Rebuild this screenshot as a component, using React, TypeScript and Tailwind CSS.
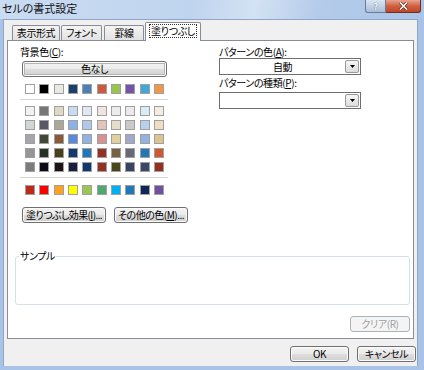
import React from 'react';

const row1 = ['#ffffff', '#000000', '#eceae0', '#17406e', '#4a82b8', '#cc5a3c', '#98c64c', '#7454a6', '#40a8d8', '#f09848'];
const shades = [
  ['#f2f2f2', '#767676', '#e0d8c4', '#c8dcf0', '#dfe8f4', '#f0e4e0', '#ececec', '#ece8ec', '#d8ecf8', '#f4ece4'],
  ['#d2d6d4', '#585866', '#aca898', '#8cb0e8', '#b0c8ec', '#e2c4b8', '#e6dcc8', '#cacaca', '#b8d0f0', '#f2dcc2'],
  ['#a4a6ac', '#404838', '#8a5a38', '#5888e0', '#92b2e0', '#d89090', '#e0d09c', '#a4a8c8', '#92b2e0', '#dcc490'],
  ['#94969a', '#283028', '#484018', '#123a70', '#2078b8', '#943226', '#786044', '#686878', '#2078b8', '#d05830'],
  ['#7c7c7c', '#0c0c14', '#1c1414', '#1c1c3c', '#103870', '#943022', '#484818', '#384464', '#384868', '#943022'],
];
const standard = ['#c02818', '#ff0000', '#ffa020', '#ffff00', '#98c850', '#50a870', '#00b0f0', '#2078b8', '#102858', '#7050a0'];

function Swatch({ c }: { c: string }) {
  return <div className="w-[10px] h-[10px] border border-[#a0a0a0] shrink-0" style={{ background: c }} />;
}

function SwatchRow({ colors }: { colors: string[] }) {
  return (
    <div className="ml-[17px] w-[139px] h-[10px] flex justify-between">
      {colors.map((c, i) => (
        <Swatch key={i} c={c} />
      ))}
    </div>
  );
}

function Btn({ children, className = '' }: { children: React.ReactNode; className?: string }) {
  return (
    <div
      className={`h-[16px] rounded-[3px] border border-[#707070] bg-[linear-gradient(#f3f3f3_0%,#ebebeb_50%,#dedede_50%,#d0d0d0_100%)] shadow-[inset_0_0_0_1px_#fbfbfb] flex items-center justify-center whitespace-nowrap text-[10px] leading-none text-black ${className}`}
    >
      {children}
    </div>
  );
}

function Dropdown({ value }: { value: string }) {
  return (
    <div className="h-[17px] w-[142px] border border-[#6e6e6e] bg-white flex items-center">
      <div className="flex-1 text-center text-[10px] leading-none">{value}</div>
      <div className="w-[14px] h-[13px] mr-[1px] border border-[#9a9a9a] rounded-[2px] bg-[linear-gradient(#f6f6f6,#dcdcdc)] flex items-center justify-center">
        <svg width="5" height="3" viewBox="0 0 5 3">
          <polygon points="0,0 5,0 2.5,3" fill="#000" />
        </svg>
      </div>
    </div>
  );
}

export default function App() {
  return (
    <div className="w-[424px] h-[370px] bg-[#a9c3e8] flex flex-col overflow-hidden font-['Noto_Sans_CJK_JP','Noto_Sans',sans-serif] [font-feature-settings:'palt'] tracking-[-0.4px] text-black">
      {/* title bar */}
      <div className="h-[19px] flex items-start bg-[linear-gradient(100deg,#cadcf2_0%,#bfd4ee_45%,#d3e2f4_60%,#b4cbea_75%,#aac4e8_100%)]">
        <div className="flex-1 pl-[2px] pt-[1px] text-[11px] leading-[14px] tracking-normal text-[#111]">セルの書式設定</div>
        <div className="w-[21px] h-[13px] rounded-bl-[3px] border border-t-0 border-[#6a7c96] bg-[linear-gradient(#dbe5f2,#aabdd8)] flex items-start justify-center pt-[1px]">
          <span className="text-[9px] leading-[11px] font-bold text-white [text-shadow:0_0_1px_#2a3a55]">?</span>
        </div>
        <div className="w-[35px] h-[13px] mr-[3px] rounded-br-[3px] border border-t-0 border-l-0 border-[#6b2f25] bg-[linear-gradient(#e9a492,#d0603f_50%,#c2442a)] flex items-center justify-center">
          <svg width="9" height="8" viewBox="0 0 9 8">
            <path d="M1 0.5 L8 7.5 M8 0.5 L1 7.5" stroke="#4a1a10" strokeWidth="2.6" />
            <path d="M1 0.5 L8 7.5 M8 0.5 L1 7.5" stroke="#fff" strokeWidth="1.6" />
          </svg>
        </div>
      </div>

      {/* middle */}
      <div className="h-[347px] flex">
        <div className="w-[3px]" />
        <div className="w-[415px] border border-b-0 border-[#8ea6c8] bg-[#f0f0f0] flex flex-col">
          {/* tabs */}
          <div className="h-[20px] pt-[2px] pl-[8px] flex items-end text-[10px] leading-none">
            <div className="w-[48px] h-[15px] border border-b-0 border-[#898c95] rounded-t-[2px] bg-[linear-gradient(#f4f4f4,#e2e2e2)] flex items-center justify-center">
              表示形式
            </div>
            <div className="ml-[1px] w-[41px] h-[15px] border border-b-0 border-[#898c95] rounded-t-[2px] bg-[linear-gradient(#f4f4f4,#e2e2e2)] flex items-center justify-center">
              フォント
            </div>
            <div className="ml-[2px] w-[40px] h-[15px] border border-b-0 border-[#898c95] rounded-t-[2px] bg-[linear-gradient(#f4f4f4,#e2e2e2)] flex items-center justify-center">
              罫線
            </div>
            <div className="ml-[1px] w-[56px] h-[19px] -mb-px relative z-10 border border-b-0 border-[#898c95] rounded-t-[2px] bg-white flex items-start justify-center pt-[2px]">
              <span className="outline outline-1 outline-dotted outline-[#333] px-[1px] h-[12px] flex items-center">塗りつぶし</span>
            </div>
          </div>

          {/* panel */}
          <div className="mx-[3px] h-[299px] border border-[#898c95] bg-white flex flex-col text-[10px] leading-none">
            <div className="flex">
              {/* left column */}
              <div className="w-[211px] flex flex-col">
                <div className="mt-[4px] ml-[12px] h-[13px] flex items-center">
                  背景色(<u>C</u>):
                </div>
                <Btn className="mt-[3px] ml-[14px] w-[145px] border-[#5f5f5f] shadow-[inset_0_0_0_1px_#fdfdfd,inset_0_0_0_2px_#b4b4b4]">
                  色なし
                </Btn>
                <div className="mt-[7px]">
                  <SwatchRow colors={row1} />
                </div>
                <div className="mt-[5px] ml-[12px] w-[148px] h-px bg-[#d6d6d6]" />
                <div className="mt-[6px] flex flex-col gap-[4px]">
                  {shades.map((r, i) => (
                    <SwatchRow key={i} colors={r} />
                  ))}
                </div>
                <div className="mt-[5px] ml-[12px] w-[148px] h-px bg-[#d6d6d6]" />
                <div className="mt-[7px]">
                  <SwatchRow colors={standard} />
                </div>
                <div className="mt-[12px] ml-[14px] flex gap-[8px]">
                  <Btn className="w-[84px] tracking-[-0.6px]">
                    塗りつぶし効果(<u>I</u>)...
                  </Btn>
                  <Btn className="w-[74px] tracking-[-0.5px]">
                    その他の色(<u>M</u>)...
                  </Btn>
                </div>
              </div>
              {/* right column */}
              <div className="flex flex-col">
                <div className="mt-[5px] h-[12px] flex items-center">
                  パターンの色(<u>A</u>):
                </div>
                <Dropdown value="自動" />
                <div className="mt-[2px] h-[12px] flex items-center">
                  パターンの種類(<u>P</u>):
                </div>
                <div className="mt-[3px]">
                  <Dropdown value="" />
                </div>
              </div>
            </div>

            {/* sample group */}
            <div className="mt-[33px] ml-[7px] w-[395px] h-[49px] relative border border-[#d5dfe5] rounded-[3px]">
              <div className="absolute left-[3px] top-[-7px] px-[1px] bg-white h-[12px] flex items-center">サンプル</div>
            </div>
            <div className="mt-[11px] ml-[7px] w-[395px] flex justify-end">
              <div className="w-[60px] h-[16px] rounded-[3px] border border-[#adb2b5] bg-[#f4f4f4] flex items-center justify-center text-[#a0a0a0]">
                クリア(R)
              </div>
            </div>
          </div>

          {/* bottom buttons */}
          <div className="mt-[7px] pr-[1px] flex justify-end gap-[8px]">
            <Btn className="w-[59px] border-[#3c7fb1] shadow-[inset_0_0_0_1px_#c4e8fb]">OK</Btn>
            <Btn className="w-[59px]">キャンセル</Btn>
          </div>
        </div>
        <div className="flex-1" />
      </div>
      <div className="h-[4px]" />
    </div>
  );
}
